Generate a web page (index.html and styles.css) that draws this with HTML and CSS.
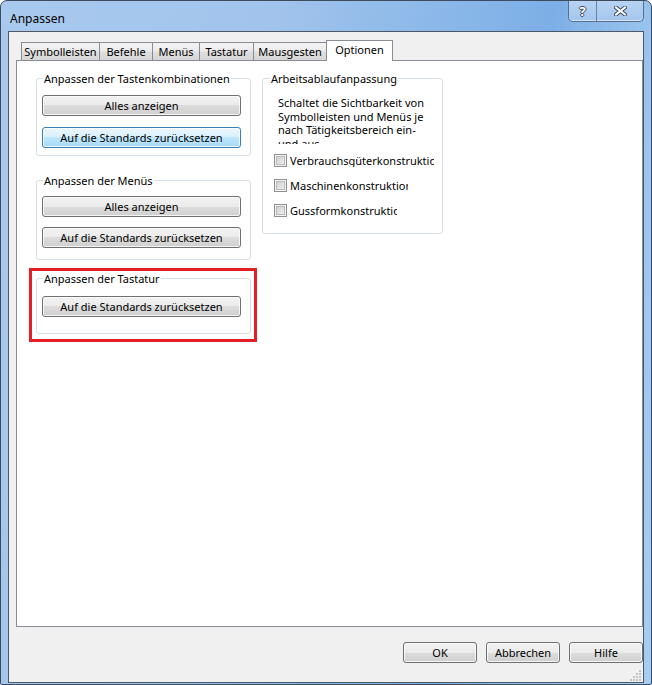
FILE: index.html
```html
<!DOCTYPE html>
<html lang="de">
<head>
<meta charset="utf-8">
<title>Anpassen</title>
<link rel="stylesheet" href="styles.css">
</head>
<body>
<div class="window">
  <div class="titlebar">
    <span class="title">Anpassen</span>
    <div class="caption-btns">
      <span class="cb help">?</span>
      <span class="cb close">
        <svg width="13" height="10" viewBox="0 0 13 10">
          <path d="M2 1.5 L11 8.5 M11 1.5 L2 8.5" stroke="#3b4a5e" stroke-width="4" stroke-linecap="square"/>
          <path d="M2 1.5 L11 8.5 M11 1.5 L2 8.5" stroke="#ffffff" stroke-width="2" stroke-linecap="square"/>
        </svg>
      </span>
    </div>
  </div>
  <div class="client">
    <div class="tabs">
      <span class="tab t-sym">Symbolleisten</span>
      <span class="tab t-bef">Befehle</span>
      <span class="tab t-men">Menüs</span>
      <span class="tab t-tas">Tastatur</span>
      <span class="tab t-mau">Mausgesten</span>
      <span class="tab t-opt active">Optionen</span>
    </div>
    <div class="page">
      <div class="col-left">
        <fieldset class="group g1">
          <legend>Anpassen der Tastenkombinationen</legend>
          <div class="btn">Alles anzeigen</div>
          <div class="btn hot second">Auf die Standards zurücksetzen</div>
        </fieldset>
        <fieldset class="group g2">
          <legend>Anpassen der Menüs</legend>
          <div class="btn">Alles anzeigen</div>
          <div class="btn second">Auf die Standards zurücksetzen</div>
        </fieldset>
        <div class="highlight">
          <fieldset class="group g3">
            <legend>Anpassen der Tastatur</legend>
            <div class="btn">Auf die Standards zurücksetzen</div>
          </fieldset>
        </div>
      </div>
      <fieldset class="group workflow">
        <legend>Arbeitsablaufanpassung</legend>
        <div class="desc">Schaltet die Sichtbarkeit von<br>Symbolleisten und Menüs je<br>nach Tätigkeitsbereich ein-<br>und aus</div>
        <div class="checks">
          <div class="check"><span class="cbx"></span><span class="lbl lbl-1">Verbrauchsgüterkonstruktion</span></div>
          <div class="check"><span class="cbx"></span><span class="lbl lbl-2">Maschinenkonstruktion</span></div>
          <div class="check"><span class="cbx"></span><span class="lbl lbl-3">Gussformkonstruktion</span></div>
        </div>
      </fieldset>
    </div>
    <div class="footer">
      <div class="btn fbtn">OK</div>
      <div class="btn fbtn">Abbrechen</div>
      <div class="btn fbtn">Hilfe</div>
    </div>
    <svg class="grip" width="12" height="12" viewBox="0 0 12 12">
      <g fill="#c4c4c4">
        <rect x="9" y="1" width="2" height="2"/>
        <rect x="6" y="4" width="2" height="2"/><rect x="9" y="4" width="2" height="2"/>
        <rect x="3" y="7" width="2" height="2"/><rect x="6" y="7" width="2" height="2"/><rect x="9" y="7" width="2" height="2"/>
        <rect x="0" y="10" width="2" height="2"/><rect x="3" y="10" width="2" height="2"/><rect x="6" y="10" width="2" height="2"/><rect x="9" y="10" width="2" height="2"/>
      </g>
    </svg>
  </div>
</div>
</body>
</html>
```
FILE: styles.css
```css
html, body {
  margin: 0;
  padding: 0;
}
body {
  width: 652px;
  height: 685px;
  overflow: hidden;
  background: #ffffff;
  font-family: "Noto Sans", "DejaVu Sans", sans-serif;
  font-size: 11px;
  color: #000;
}
.window {
  box-sizing: border-box;
  width: 652px;
  height: 685px;
  border: 1px solid #3d4b5e;
  border-radius: 7px 7px 2px 2px;
  padding: 0 7px 1px 7px;
  display: flex;
  flex-direction: column;
  background: linear-gradient(100deg, #a9c9ee 0%, #a2c4ec 35%, #86b5e8 62%, #7cafe6 72%, #98c2ee 84%, #a8cdf2 100%);
}
.titlebar {
  height: 30px;
  display: flex;
  align-items: flex-start;
  flex: none;
}
.title {
  margin: 10px 0 0 2px;
  line-height: 15px;
  font-size: 12px;
}
.caption-btns {
  margin-left: auto;
  display: flex;
  height: 21px;
  box-sizing: border-box;
  border: 1px solid #5b6f8b;
  border-top: none;
  border-radius: 0 0 5px 5px;
  background: linear-gradient(#b7d3f2, #a3c6ee);
  box-shadow: inset 0 -1px 0 rgba(255,255,255,0.5);
}
.cb {
  display: flex;
  align-items: center;
  justify-content: center;
}
.help {
  width: 28px;
  box-sizing: border-box;
  border-right: 1px solid #6d82a0;
  font-weight: bold;
  font-size: 13px;
  color: #fff;
  line-height: 20px;
  text-shadow: 1px 0 0 #3b4a5e, -1px 0 0 #3b4a5e, 0 1px 0 #3b4a5e, 0 -1px 0 #3b4a5e;
}
.close {
  width: 46px;
}
.client {
  flex: 1;
  position: relative;
  border: 1px solid #4c5867;
  background: #f0f0f0;
  padding: 8px 0 0 7px;
  display: flex;
  flex-direction: column;
}
.tabs {
  height: 20px;
  display: flex;
  align-items: flex-start;
  padding-left: 5px;
  flex: none;
}
.tab {
  box-sizing: border-box;
  height: 18px;
  margin-top: 2px;
  margin-left: -1px;
  border: 1px solid #898c95;
  border-bottom: none;
  background: linear-gradient(#f3f3f3 0%, #ebebeb 45%, #dedede 55%, #d6d6d6 100%);
  text-align: center;
  line-height: 17px;
  white-space: nowrap;
}
.tab:first-child {
  margin-left: 0;
}
.tab.active {
  position: relative;
  z-index: 1;
  height: 21px;
  margin-top: 0;
  background: #ffffff;
  line-height: 18px;
}
.t-sym { width: 79px; }
.t-bef { width: 54px; }
.t-men { width: 48px; }
.t-tas { width: 55px; }
.t-mau { width: 74px; }
.t-opt { width: 67px; }
.page {
  box-sizing: border-box;
  height: 567px;
  border: 1px solid #898c95;
  background: #ffffff;
  padding: 10px 0 0 19px;
  display: flex;
  align-items: flex-start;
  gap: 11px;
  flex: none;
}
.col-left {
  width: 215px;
  display: flex;
  flex-direction: column;
}
.group {
  box-sizing: border-box;
  margin: 0;
  min-width: 0;
  border: 1px solid #d5dfe5;
  border-radius: 3px;
  padding: 8px 9px 7px 5px;
}
.group legend {
  padding: 0 1px;
  margin-left: 1px;
  line-height: 15px;
  white-space: nowrap;
}
.g1 {
  padding-top: 9px;
  padding-bottom: 7px;
}
.g1 .second {
  margin-top: 11px;
}
.g2 {
  margin-top: 17px;
  padding-bottom: 11px;
}
.g2 .second {
  margin-top: 10px;
}
.highlight {
  margin: 8px -6px 0 -7px;
  border: 3px solid #e31e26;
  padding: 0 3px 5px 4px;
}
.g3 {
  padding-top: 10px;
  padding-bottom: 16px;
}
.btn {
  box-sizing: border-box;
  height: 21px;
  border: 1px solid #707070;
  border-radius: 3px;
  background: linear-gradient(#f2f2f2 0%, #ebebeb 50%, #dddddd 50%, #cfcfcf 100%);
  box-shadow: inset 0 0 0 1px rgba(252,252,252,0.85);
  text-align: center;
  line-height: 19px;
  white-space: nowrap;
}
.btn.hot {
  border-color: #3c7fb1;
  background: linear-gradient(#eaf6fd 0%, #d9f0fc 50%, #bee6fd 50%, #a7d9f5 100%);
}
.workflow {
  width: 181px;
  margin-top: 0;
  padding: 0 6px 16px 7px;
}
.workflow legend {
  margin-left: 0;
}
.desc {
  margin: 10px 0 0 8px;
  line-height: 13.5px;
  height: 48px;
  overflow: hidden;
  white-space: nowrap;
}
.checks {
  margin: 10px 0 0 4px;
  width: 160px;
  display: flex;
  flex-direction: column;
  gap: 12px;
}
.check {
  display: flex;
  align-items: center;
  height: 13px;
  gap: 3px;
  overflow: hidden;
  white-space: nowrap;
}
.cbx {
  flex: none;
  box-sizing: border-box;
  width: 13px;
  height: 13px;
  border: 1px solid #8e8f8f;
  background: linear-gradient(135deg, #c9c9c9 0%, #e2e2e2 55%, #f6f6f6 100%);
  box-shadow: inset 0 0 0 1px #f4f4f4, inset 0 0 0 2px #b9b9b9;
}
.lbl {
  line-height: 13px;
  overflow: hidden;
  flex: none;
}
.lbl-1 { width: 144px; }
.lbl-2 { width: 118px; }
.lbl-3 { width: 107px; }
.footer {
  margin-top: 15px;
  display: flex;
  justify-content: flex-end;
  gap: 9px;
}
.fbtn {
  width: 74px;
}
.grip {
  position: absolute;
  right: 1px;
  bottom: 1px;
}
```
